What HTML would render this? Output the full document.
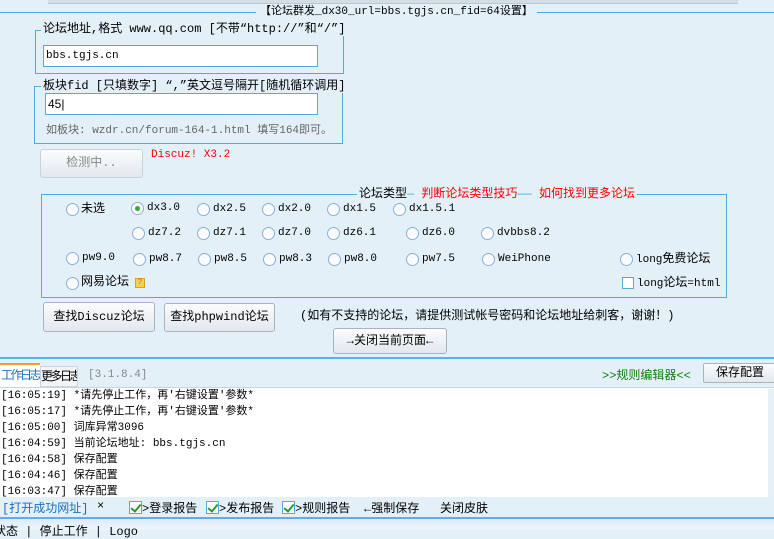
<!DOCTYPE html>
<html><head><meta charset="utf-8"><style>
*{margin:0;padding:0;box-sizing:border-box}
body{width:774px;height:530px;overflow:hidden;background:#e3f0f8;font-family:"Liberation Mono","Noto Sans CJK SC",monospace;font-size:11px;color:#000;position:relative}
.a{position:absolute;white-space:nowrap}
.fs{position:absolute;border:1px solid #55aadd}
.lg{position:absolute;background:#e3f0f8;padding:0 2px;font-size:12px;line-height:14px}
.in{position:absolute;background:#fff;border:1px solid #5aa8d8;padding-left:2px;font-size:11px;line-height:20px}
.btn{position:absolute;border:1px solid #aab4bf;border-radius:3px;background:linear-gradient(#fbfcfd,#e2e8ee);text-align:center;font-size:12px}
.r{position:absolute;width:13px;height:13px;border-radius:50%;border:1px solid #8ab0d8;background:linear-gradient(#f6f8fb,#fff)}
.rl{position:absolute;font-size:11px;line-height:13px;white-space:nowrap}
.cb{display:inline-block;width:13px;height:13px;border:1px solid #5aa8d8;background:#fff;vertical-align:-2px;position:relative}
.cb:after{content:"";position:absolute;left:3px;top:0px;width:4px;height:8px;border:solid #2a9a2a;border-width:0 2px 2px 0;transform:rotate(40deg)}
.log div{height:16px;line-height:16px;font-size:11px}
</style></head><body>
<div class="a" style="left:48px;top:0;width:690px;height:4px;background:#d4dde4;border-bottom:1px solid #bcc8d0"></div>
<div class="a" style="left:0;top:12px;width:774px;height:1px;background:#44aadd"></div>
<div class="a" style="left:256px;top:5px;background:#e3f0f8;padding:0 4px;font-size:11px;line-height:14px">【论坛群发_dx30_url=bbs.tgjs.cn_fid=64设置】</div>

<div class="fs" style="left:35px;top:30px;width:309px;height:44px"></div>
<div class="lg" style="left:41px;top:22px">论坛地址,格式 www.qq.com [不带“http://”和“/”]</div>
<div class="in" style="left:43px;top:45px;width:275px;height:22px">bbs.tgjs.cn</div>

<div class="fs" style="left:34px;top:86px;width:309px;height:58px"></div>
<div class="lg" style="left:41px;top:79px">板块fid [只填数字] “,”英文逗号隔开[随机循环调用]</div>
<div class="in" style="left:45px;top:93px;width:273px;height:22px;font-family:'Liberation Sans',sans-serif;font-size:12px">45|</div>
<div class="a" style="left:46px;top:121px;color:#666;font-size:11px">如板块: wzdr.cn/forum-164-1.html 填写164即可。</div>

<div class="btn" style="left:40px;top:149px;width:103px;height:29px;line-height:27px;color:#888;border-color:#c8d2dc">检测中..</div>
<div class="a" style="left:151px;top:149px;color:#f00;font-size:11px">Discuz! X3.2</div>

<div class="fs" style="left:41px;top:194px;width:686px;height:104px"></div>
<div class="lg" style="left:357px;top:187px">论坛类型<span style="color:#4ad">—</span> <span style="color:#f00">判断论坛类型技巧</span><span style="color:#4ad">——</span> <span style="color:#f00">如何找到更多论坛</span></div>

<div class="r" style="left:66px;top:203px"></div><div class="rl" style="left:81px;top:203px;font-size:12px">未选</div>
<div class="r" style="left:131px;top:202px;background:radial-gradient(#3a3 0 2px,#fff 3px)"></div><div class="rl" style="left:147px;top:202px">dx3.0</div>
<div class="r" style="left:197px;top:203px"></div><div class="rl" style="left:213px;top:203px">dx2.5</div>
<div class="r" style="left:262px;top:203px"></div><div class="rl" style="left:278px;top:203px">dx2.0</div>
<div class="r" style="left:327px;top:203px"></div><div class="rl" style="left:343px;top:203px">dx1.5</div>
<div class="r" style="left:393px;top:203px"></div><div class="rl" style="left:409px;top:203px">dx1.5.1</div>

<div class="r" style="left:132px;top:227px"></div><div class="rl" style="left:148px;top:227px">dz7.2</div>
<div class="r" style="left:197px;top:227px"></div><div class="rl" style="left:213px;top:227px">dz7.1</div>
<div class="r" style="left:262px;top:227px"></div><div class="rl" style="left:278px;top:227px">dz7.0</div>
<div class="r" style="left:327px;top:227px"></div><div class="rl" style="left:343px;top:227px">dz6.1</div>
<div class="r" style="left:406px;top:227px"></div><div class="rl" style="left:422px;top:227px">dz6.0</div>
<div class="r" style="left:481px;top:227px"></div><div class="rl" style="left:497px;top:227px">dvbbs8.2</div>

<div class="r" style="left:66px;top:252px"></div><div class="rl" style="left:82px;top:252px">pw9.0</div>
<div class="r" style="left:133px;top:253px"></div><div class="rl" style="left:149px;top:253px">pw8.7</div>
<div class="r" style="left:198px;top:253px"></div><div class="rl" style="left:214px;top:253px">pw8.5</div>
<div class="r" style="left:263px;top:253px"></div><div class="rl" style="left:279px;top:253px">pw8.3</div>
<div class="r" style="left:328px;top:253px"></div><div class="rl" style="left:344px;top:253px">pw8.0</div>
<div class="r" style="left:406px;top:253px"></div><div class="rl" style="left:422px;top:253px">pw7.5</div>
<div class="r" style="left:482px;top:253px"></div><div class="rl" style="left:498px;top:253px">WeiPhone</div>
<div class="r" style="left:620px;top:253px"></div><div class="rl" style="left:636px;top:253px">long<span style="font-size:12px">免费论坛</span></div>

<div class="r" style="left:66px;top:277px"></div><div class="rl" style="left:81px;top:276px;font-size:12px">网易论坛</div>
<div class="a" style="left:135px;top:278px;width:10px;height:10px;background:#f8d34a;border:1px solid #d9a520;font-size:8px;line-height:8px;text-align:center;color:#a66">?</div>
<div class="a" style="left:622px;top:277px;width:12px;height:12px;border:1px solid #5aa8d8;background:#fff"></div><div class="rl" style="left:637px;top:277px">long<span style="font-size:12px">论坛</span>=html</div>

<div class="btn" style="left:43px;top:302px;width:112px;height:30px;line-height:28px">查找Discuz论坛</div>
<div class="btn" style="left:164px;top:303px;width:111px;height:29px;line-height:27px">查找phpwind论坛</div>
<div class="a" style="left:300px;top:306px;font-size:12px">(如有不支持的论坛，请提供测试帐号密码和论坛地址给刺客，谢谢！)</div>
<div class="btn" style="left:333px;top:328px;width:114px;height:26px;line-height:24px">→关闭当前页面←</div>

<div class="a" style="left:0;top:357px;width:774px;height:2px;background:#55b4e4"></div>
<div class="a" style="left:0;top:363px;width:40px;height:25px;background:#fff;border-top:2px solid #f0a030;color:#1a6fc0;font-size:12px;line-height:22px;text-align:center;letter-spacing:-2.5px;overflow:hidden">工作日志</div>
<div class="a" style="left:40px;top:366px;width:38px;height:21px;background:#f2f5f8;border:1px solid #c8d4de;font-size:12px;line-height:20px;text-align:center;letter-spacing:-2.5px;overflow:hidden">更多日志</div>
<div class="a" style="left:88px;top:369px;color:#888">[3.1.8.4]</div>
<div class="a" style="left:602px;top:366px;color:#108010;font-size:12px">&gt;&gt;规则编辑器&lt;&lt;</div>
<div class="btn" style="left:703px;top:363px;width:74px;height:20px;line-height:18px;border-radius:2px">保存配置</div>

<div class="a" style="left:0;top:387px;width:774px;height:110px;background:#fff;border-top:1px solid #c8d6e0"></div>
<div class="a" style="left:768px;top:389px;width:6px;height:108px;background:#e6f0f6"></div>
<div class="a log" style="left:1px;top:388px">
<div>[16:05:19] *请先停止工作，再'右键设置'参数*</div>
<div>[16:05:17] *请先停止工作，再'右键设置'参数*</div>
<div>[16:05:00] 词库异常3096</div>
<div>[16:04:59] 当前论坛地址: bbs.tgjs.cn</div>
<div>[16:04:58] 保存配置</div>
<div>[16:04:46] 保存配置</div>
<div>[16:03:47] 保存配置</div>
</div>
<div class="a" style="left:0;top:497px;width:774px;height:20px;background:#e3f0f8"></div>
<div class="a" style="left:2px;top:499px;color:#1a6fc0;font-size:12px">[打开成功网址]</div>
<div class="a" style="left:97px;top:499px;font-size:12px">×</div>
<div class="a" style="left:129px;top:499px;font-size:12px"><span class="cb"></span>&gt;登录报告</div>
<div class="a" style="left:206px;top:499px;font-size:12px"><span class="cb"></span>&gt;发布报告</div>
<div class="a" style="left:282px;top:499px;font-size:12px"><span class="cb"></span>&gt;规则报告</div>
<div class="a" style="left:364px;top:499px;font-size:12px">←强制保存</div>
<div class="a" style="left:440px;top:499px;font-size:12px">关闭皮肤</div>
<div class="a" style="left:0;top:517px;width:774px;height:2px;background:#6aa8e8"></div>
<div class="a" style="left:0;top:519px;width:774px;height:11px;background:linear-gradient(#dcebf8,#eef5fb)"></div>
<div class="a" style="left:-6px;top:522px;font-size:12px">状态 | 停止工作 | Logo</div>
</body></html>
